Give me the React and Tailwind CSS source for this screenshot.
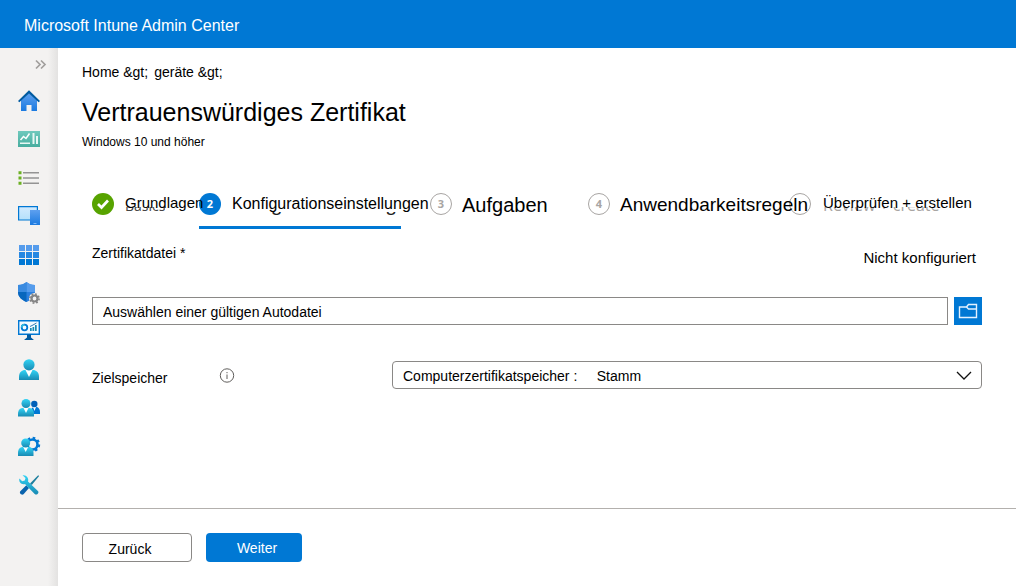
import React from "react";

const icons = [
  {
    name: "Startseite",
    art: (
      <>
        <path d="M4 11 12 4l8 7v11H4z" fill="url(#blue)" />
        <path d="M1 12 12 1.200 23 12l-1.300 1.300L12 4.500 2.300 13.300z" fill="#005ba1" />
        <path d="M9.500 16h5v6h-5z" fill="#f3f2f1" />
      </>
    ),
  },
  {
    name: "Dashboard",
    art: (
      <>
        <path d="M1 3h22v16H1z" fill="url(#green)" />
        <path d="m3.500 12 3-3.500L9 10.500l3.500-5" fill="none" stroke="#fff" strokeWidth="1.500" />
        <path d="M3 14.500h10V16H3zM15.500 5h2v11h-2zM19 8h2v8h-2z" fill="#e8f7f4" />
      </>
    ),
  },
  {
    name: "Alle Dienste",
    art: (
      <>
        <path d="M6 6h16v1.600H6zM6 11.200h16v1.600H6zM6 16.400h16V18H6z" fill="#949494" />
        <path d="M1.500 5.200h3v3h-3zM1.500 10.500h3v3h-3zM1.500 15.700h3v3h-3z" fill="#6bb022" />
      </>
    ),
  },
  {
    name: "Geräte",
    art: (
      <>
        <path d="M1.600 2.600h18.800v13.400H1.600z" fill="url(#pale)" stroke="#0078d4" strokeWidth="1.200" />
        <path d="M13 6h10v15H13z" fill="url(#blue)" />
        <path d="M16.500 19h3v.8h-3z" fill="#9cc8ff" />
      </>
    ),
  },
  {
    name: "Apps",
    art: (
      <>
        <path d="M2 2h6v6H2zM9 2h6v6H9zM16 2h6v6h-6z" fill="#559cec" />
        <path d="M2 9h6v6H2zM9 9h6v6H9zM16 9h6v6h-6z" fill="#2688e2" />
        <path d="M2 16h6v6H2zM9 16h6v6H9zM16 16h6v6h-6z" fill="#0078d4" />
      </>
    ),
  },
  {
    name: "Endpunktsicherheit",
    art: (
      <>
        <path d="M1 4c4 0 6-1 8.500-3C12 3 14 4 18 4v7c0 5-4 8-8.500 10C5 19 1 16 1 11z" fill="#2c80de" />
        <path d="M9.500 1C12 3 14 4 18 4v7H9.500z" fill="#559cec" />
        <path d="M1 4c4 0 6-1 8.500-3v10H1z" fill="#3a8be0" />
        <path d="M1 11h8.500v10C5 19 1 16 1 11z" fill="#0867bd" />
        <circle cx="17.500" cy="17.500" r="4.500" fill="none" stroke="#f3f2f1" strokeWidth="2" />
        <circle cx="17.500" cy="17.500" r="3" fill="none" stroke="#858585" strokeWidth="2.200" />
        <circle cx="17.500" cy="17.500" r="4.600" fill="none" stroke="#858585" strokeWidth="1.600" strokeDasharray="1.800 1.812" />
      </>
    ),
  },
  {
    name: "Berichte",
    art: (
      <>
        <path d="M1.700 1.700h20.600v13.600H1.700z" fill="#f4fbff" stroke="#0078d4" strokeWidth="1.400" />
        <path d="M10 15.500h4v3l3 2.500H7l3-2.500z" fill="#005ba1" />
        <circle cx="7.500" cy="8.500" r="2.800" fill="none" stroke="#0078d4" strokeWidth="1.800" />
        <path d="M7.500 5.700a2.800 2.800 0 0 0-2.800 2.800" fill="none" stroke="#32bedd" strokeWidth="1.800" />
        <path d="M13 9h1.700v3H13zM15.500 8h1.700v4h-1.700zM18 6h1.700v6H18z" fill="#198ab3" />
        <path d="m13 7.500 3-1.500 3.500-2" fill="none" stroke="#005ba1" strokeWidth=".8" />
      </>
    ),
  },
  {
    name: "Benutzer",
    art: (
      <>
        <path d="M2 22v-3c0-5 3-7 6-7h8c3 0 6 2 6 7v3z" fill="url(#cyan)" />
        <path d="M8.500 12h7L12 19z" fill="#fff" />
        <circle cx="12" cy="6.800" r="5.600" fill="url(#cyan)" />
      </>
    ),
  },
  {
    name: "Gruppen",
    art: (
      <>
        <path d="M14 18v-3c0-3 2-4 3-4h2c2.500 0 4 2 4 5v2z" fill="#0078d4" />
        <path d="m16 11 1.500 4 1.500-4z" fill="#fff" />
        <circle cx="17.300" cy="8" r="3.200" fill="#0060b8" />
        <path d="M1 20.500V18c0-4 2-6 5-6h6c3 0 5 2 5 6v2.500z" fill="url(#cyan)" />
        <path d="M6.500 12h5L9 17z" fill="#fff" />
        <circle cx="9" cy="7.500" r="4.500" fill="url(#cyan)" />
      </>
    ),
  },
  {
    name: "Mandantenverwaltung",
    art: (
      <>
        <circle cx="15.500" cy="10.500" r="5" fill="none" stroke="#0078d4" strokeWidth="2.600" />
        <circle cx="15.500" cy="10.500" r="6.700" fill="none" stroke="#0078d4" strokeWidth="2" strokeDasharray="2.600 2.662" />
        <path d="M1 22v-3c0-4 2-6 5-6h5.500c3 0 5 2 5 6v3z" fill="url(#cyan)" />
        <path d="M6.200 13h5l-2.500 5z" fill="#fff" />
        <circle cx="8.700" cy="9" r="4.500" fill="url(#cyan)" />
      </>
    ),
  },
  {
    name: "Problembehandlung und Support",
    art: (
      <>
        <path d="m21.200 2.200.9.900-7.300 8.800-1.800-1.500z" fill="#1d7f9e" />
        <path d="M9.300 12.300 12 15l-5.500 6.200c-1.800 1.500-4.700-1.200-3.200-3z" fill="#0a63ad" />
        <path d="M5.500 2.300 8.500 5 7.800 7.600 5.200 8.300 2.400 5.500C1.500 9 4.500 12 8 11l9.700 10c2 1.800 5-1 3.200-3L11 8.500c1.200-3.700-2-7.200-5.500-6.200z" fill="url(#cyan)" />
      </>
    ),
  },
];

function Gradients() {
  const stops = [
    ["blue", "#5ea0ef", "#1b7ae0"],
    ["cyan", "#32d4f5", "#198ab3"],
    ["green", "#6fc9bd", "#48ad9f"],
    ["pale", "#d2ebff", "#b4e0fb"],
  ];
  return (
    <svg className="absolute size-0" aria-hidden="true">
      <defs>
        {stops.map(([id, from, to]) => (
          <linearGradient key={id} id={id} x1="0" y1="0" x2="0" y2="1">
            <stop stopColor={from} />
            <stop offset="1" stopColor={to} />
          </linearGradient>
        ))}
      </defs>
    </svg>
  );
}

function Sidebar() {
  return (
    <nav
      aria-label="Hauptmenü"
      className="w-[58px] shrink-0 bg-[linear-gradient(to_right,#f3f2f1_48px,#e3e2e1_58px)] pt-2"
    >
      <button type="button" aria-label="Menü erweitern" className="ml-auto mr-[11px] block h-[18px] w-[13px]">
        <svg viewBox="0 0 13 18" className="h-[18px] w-[13px]" fill="none" stroke="#a19f9d" strokeWidth="1.700">
          <path d="m2 4.500 4 4-4 4M7 4.500l4 4-4 4" />
        </svg>
      </button>
      <ul className="mt-2 flex h-[422px] flex-col">
        {icons.map((icon) => (
          <li key={icon.name} className="flex flex-1 items-center justify-center">
            <a href="#" aria-label={icon.name}>
              <svg viewBox="0 0 24 24" className="size-6">{icon.art}</svg>
            </a>
          </li>
        ))}
      </ul>
    </nav>
  );
}

/* Lower edge of the untranslated caption that shows under a step label. */
function Underlay({ className, children }) {
  return (
    <span
      aria-hidden="true"
      className={"absolute left-0 flex items-end overflow-hidden font-['Open_Sans',sans-serif] " + className}
    >
      {children}
    </span>
  );
}

const pending = "border border-[#a8a5a3] text-[#a8a5a3]";

function Step({ badge, badgeClass, labelClass, active, children, underlay }) {
  return (
    <li
      aria-current={active ? "step" : undefined}
      className={"flex h-9 items-start whitespace-nowrap " + (active ? "mr-[29px] border-b-[3px] border-[#0078d4]" : "")}
    >
      <span
        className={
          "flex size-[22px] shrink-0 items-center justify-center rounded-full font-['Open_Sans',sans-serif] text-[11px] font-bold " +
          badgeClass
        }
      >
        {badge}
      </span>
      <span className={"relative " + labelClass}>
        {underlay}
        <span className="relative">{children}</span>
      </span>
    </li>
  );
}

export default function App() {
  return (
    <div className="flex min-h-screen flex-col bg-white font-['Liberation_Sans',Arial,sans-serif] text-black">
      <Gradients />
      <header className="flex h-12 items-center bg-[#0078d4] px-6 pt-1 text-base text-white">
        Microsoft Intune Admin Center
      </header>
      <div className="flex flex-1">
        <Sidebar />
        <main className="flex min-w-0 flex-1 flex-col">
          <div className="pl-6 pr-[34px]">
            <nav aria-label="Brotkrumen" className="mt-4 flex gap-[6px] text-sm leading-4">
              <a href="#">Home &amp;gt;</a>
              <a href="#">geräte &amp;gt;</a>
            </nav>
            <h1 className="mt-4 text-[25px] leading-8">Vertrauenswürdiges Zertifikat</h1>
            <p className="mt-[6px] text-xs leading-4">Windows 10 und höher</p>
          </div>

          <div className="pl-[34px] pr-[34px]">
            <ol className="mt-[43px] grid grid-cols-[107px_231px_158px_201px_1fr]">
              <Step
                badge={
                  <svg viewBox="0 0 22 22" className="size-[22px]" aria-label="Abgeschlossen">
                    <path d="m6 11 3.500 3.500L16 7.500" fill="none" stroke="#fff" strokeWidth="2.700" />
                  </svg>
                }
                badgeClass="bg-[#57a300] text-white"
                labelClass="ml-[11px] text-[15px] leading-5"
                underlay={<Underlay className="top-[14px] h-1 text-sm leading-[11px] text-[#444]">Basics</Underlay>}
              >
                Grundlagen
              </Step>
              <Step
                active
                badge="2"
                badgeClass="bg-[#0078d4] text-white"
                labelClass="ml-[11px] text-base leading-[22px]"
                underlay={
                  <Underlay className="top-[19px] h-[3px] text-base font-semibold leading-5 text-[#222]">
                    Configuration settings
                  </Underlay>
                }
              >
                Konfigurationseinstellungen
              </Step>
              <Step badge="3" badgeClass={pending} labelClass="ml-[10px] text-xl leading-6">
                Aufgaben
              </Step>
              <Step badge="4" badgeClass={pending} labelClass="ml-[10px] text-[19px] leading-6">
                Anwendbarkeitsregeln
              </Step>
              <Step
                badge=""
                badgeClass={pending}
                labelClass="ml-3 text-[15px] leading-5"
                underlay={<Underlay className="top-[14px] h-1 text-base leading-3 text-[#a8a5a3]">Review + create</Underlay>}
              >
                Überprüfen + erstellen
              </Step>
            </ol>

            <div className="mt-[14px] flex items-start justify-between text-sm leading-5">
              <label htmlFor="file">Zertifikatdatei *</label>
              <span className="mt-[5px] pr-[6px] text-[15px]">Nicht konfiguriert</span>
            </div>
            <div className="mt-[29px] flex gap-[6px]">
              <input
                id="file"
                readOnly
                defaultValue="Auswählen einer gültigen Autodatei"
                className="h-7 min-w-0 flex-1 border border-[#8a8886] px-[10px] pt-[2px] text-sm outline-none"
              />
              <button type="button" aria-label="Datei auswählen" className="flex size-7 items-center justify-center bg-[#0078d4]">
                <svg viewBox="0 0 20 20" className="size-5" fill="none" stroke="#e3f1ff" strokeWidth="1.400">
                  <path d="M1.500 6h7l2-2.500h8v13h-17zM8.500 6l2 2h8" />
                </svg>
              </button>
            </div>

            <div className="mt-9 flex items-center">
              <div className="flex w-[300px] items-center">
                <label htmlFor="store" className="w-[127px] pt-[6px] text-sm">Zielspeicher</label>
                <button type="button" aria-label="Info">
                  <svg viewBox="0 0 16 16" className="size-4" fill="none" stroke="#605e5c">
                    <circle cx="8" cy="8.500" r="6.700" />
                    <path d="M8 7.500V12M8 5v1.200" />
                  </svg>
                </button>
              </div>
              <div className="relative min-w-0 flex-1">
                <select
                  id="store"
                  className="block h-7 w-full appearance-none rounded-sm border border-[#8a8886] bg-white px-[10px] pt-[2px] text-sm outline-none"
                >
                  <option>{"Computerzertifikatspeicher :\u00a0\u00a0\u00a0\u00a0\u00a0Stamm"}</option>
                </select>
                <svg
                  viewBox="0 0 16 10"
                  aria-hidden="true"
                  className="pointer-events-none absolute right-[10px] top-[10px] h-[10px] w-4"
                  fill="none"
                  stroke="#111"
                  strokeWidth="1.300"
                >
                  <path d="m1 1 7 7 7-7" />
                </svg>
              </div>
            </div>
          </div>

          <footer className="mt-auto flex gap-[14px] border-t border-[#b3b0ad] px-6 pb-6 pt-6 text-sm">
            <button type="button" className="h-[29px] w-[110px] rounded-sm border border-[#8a8886] pr-[14px] pt-[2px]">
              Zurück
            </button>
            <button type="button" className="h-[29px] w-24 rounded-sm bg-[#0078d4] pl-[6px] text-white">
              Weiter
            </button>
          </footer>
        </main>
      </div>
    </div>
  );
}
